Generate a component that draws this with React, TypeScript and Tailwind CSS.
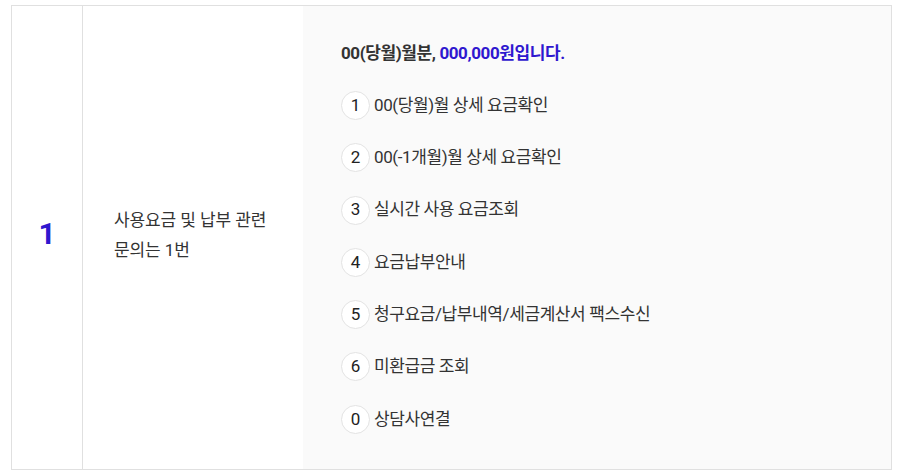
const items = [
  { key: "1", label: "00(당월)월 상세 요금확인" },
  { key: "2", label: "00(-1개월)월 상세 요금확인" },
  { key: "3", label: "실시간 사용 요금조회" },
  { key: "4", label: "요금납부안내" },
  { key: "5", label: "청구요금/납부내역/세금계산서 팩스수신" },
  { key: "6", label: "미환급금 조회" },
  { key: "0", label: "상담사연결" },
];

export default function App() {
  return (
    <div
      className="w-[899px] h-[476px] bg-white pt-[5px] pl-[11px]"
      style={{ fontFamily: 'Roboto, "Noto Sans CJK KR", sans-serif' }}
    >
      <div className="flex w-[881px] h-[465px] border border-[#e0e0e0] text-[#333]">
        <div className="w-[71px] shrink-0 border-r border-[#e0e0e0] flex items-center justify-center pb-[8px]">
          <span className="text-[30px] font-bold text-[#2f17cf] leading-none">1</span>
        </div>
        <div className="w-[220px] shrink-0 flex items-center pl-[31px] pb-[6px]">
          <p className="text-[17px] leading-[30px] tracking-[-0.1px]">
            사용요금 및 납부 관련
            <br />
            문의는 1번
          </p>
        </div>
        <div className="flex-1 bg-[#fafafa] pl-[38px] pt-[35px]">
          <p className="text-[17px] font-bold leading-[24px] tracking-[-0.4px]">
            00(당월)월분, <span className="text-[#2f17cf]">000,000원입니다.</span>
          </p>
          <ul className="mt-[26px] flex flex-col gap-[23.3px]">
            {items.map((it) => (
              <li key={it.key} className="flex items-center gap-[4px]">
                <span className="w-[29px] h-[29px] rounded-full border border-[#e3e3e3] bg-white flex items-center justify-center text-[17px] text-[#222]">
                  {it.key}
                </span>
                <span className="text-[17px] tracking-[-0.4px]">{it.label}</span>
              </li>
            ))}
          </ul>
        </div>
      </div>
    </div>
  );
}
